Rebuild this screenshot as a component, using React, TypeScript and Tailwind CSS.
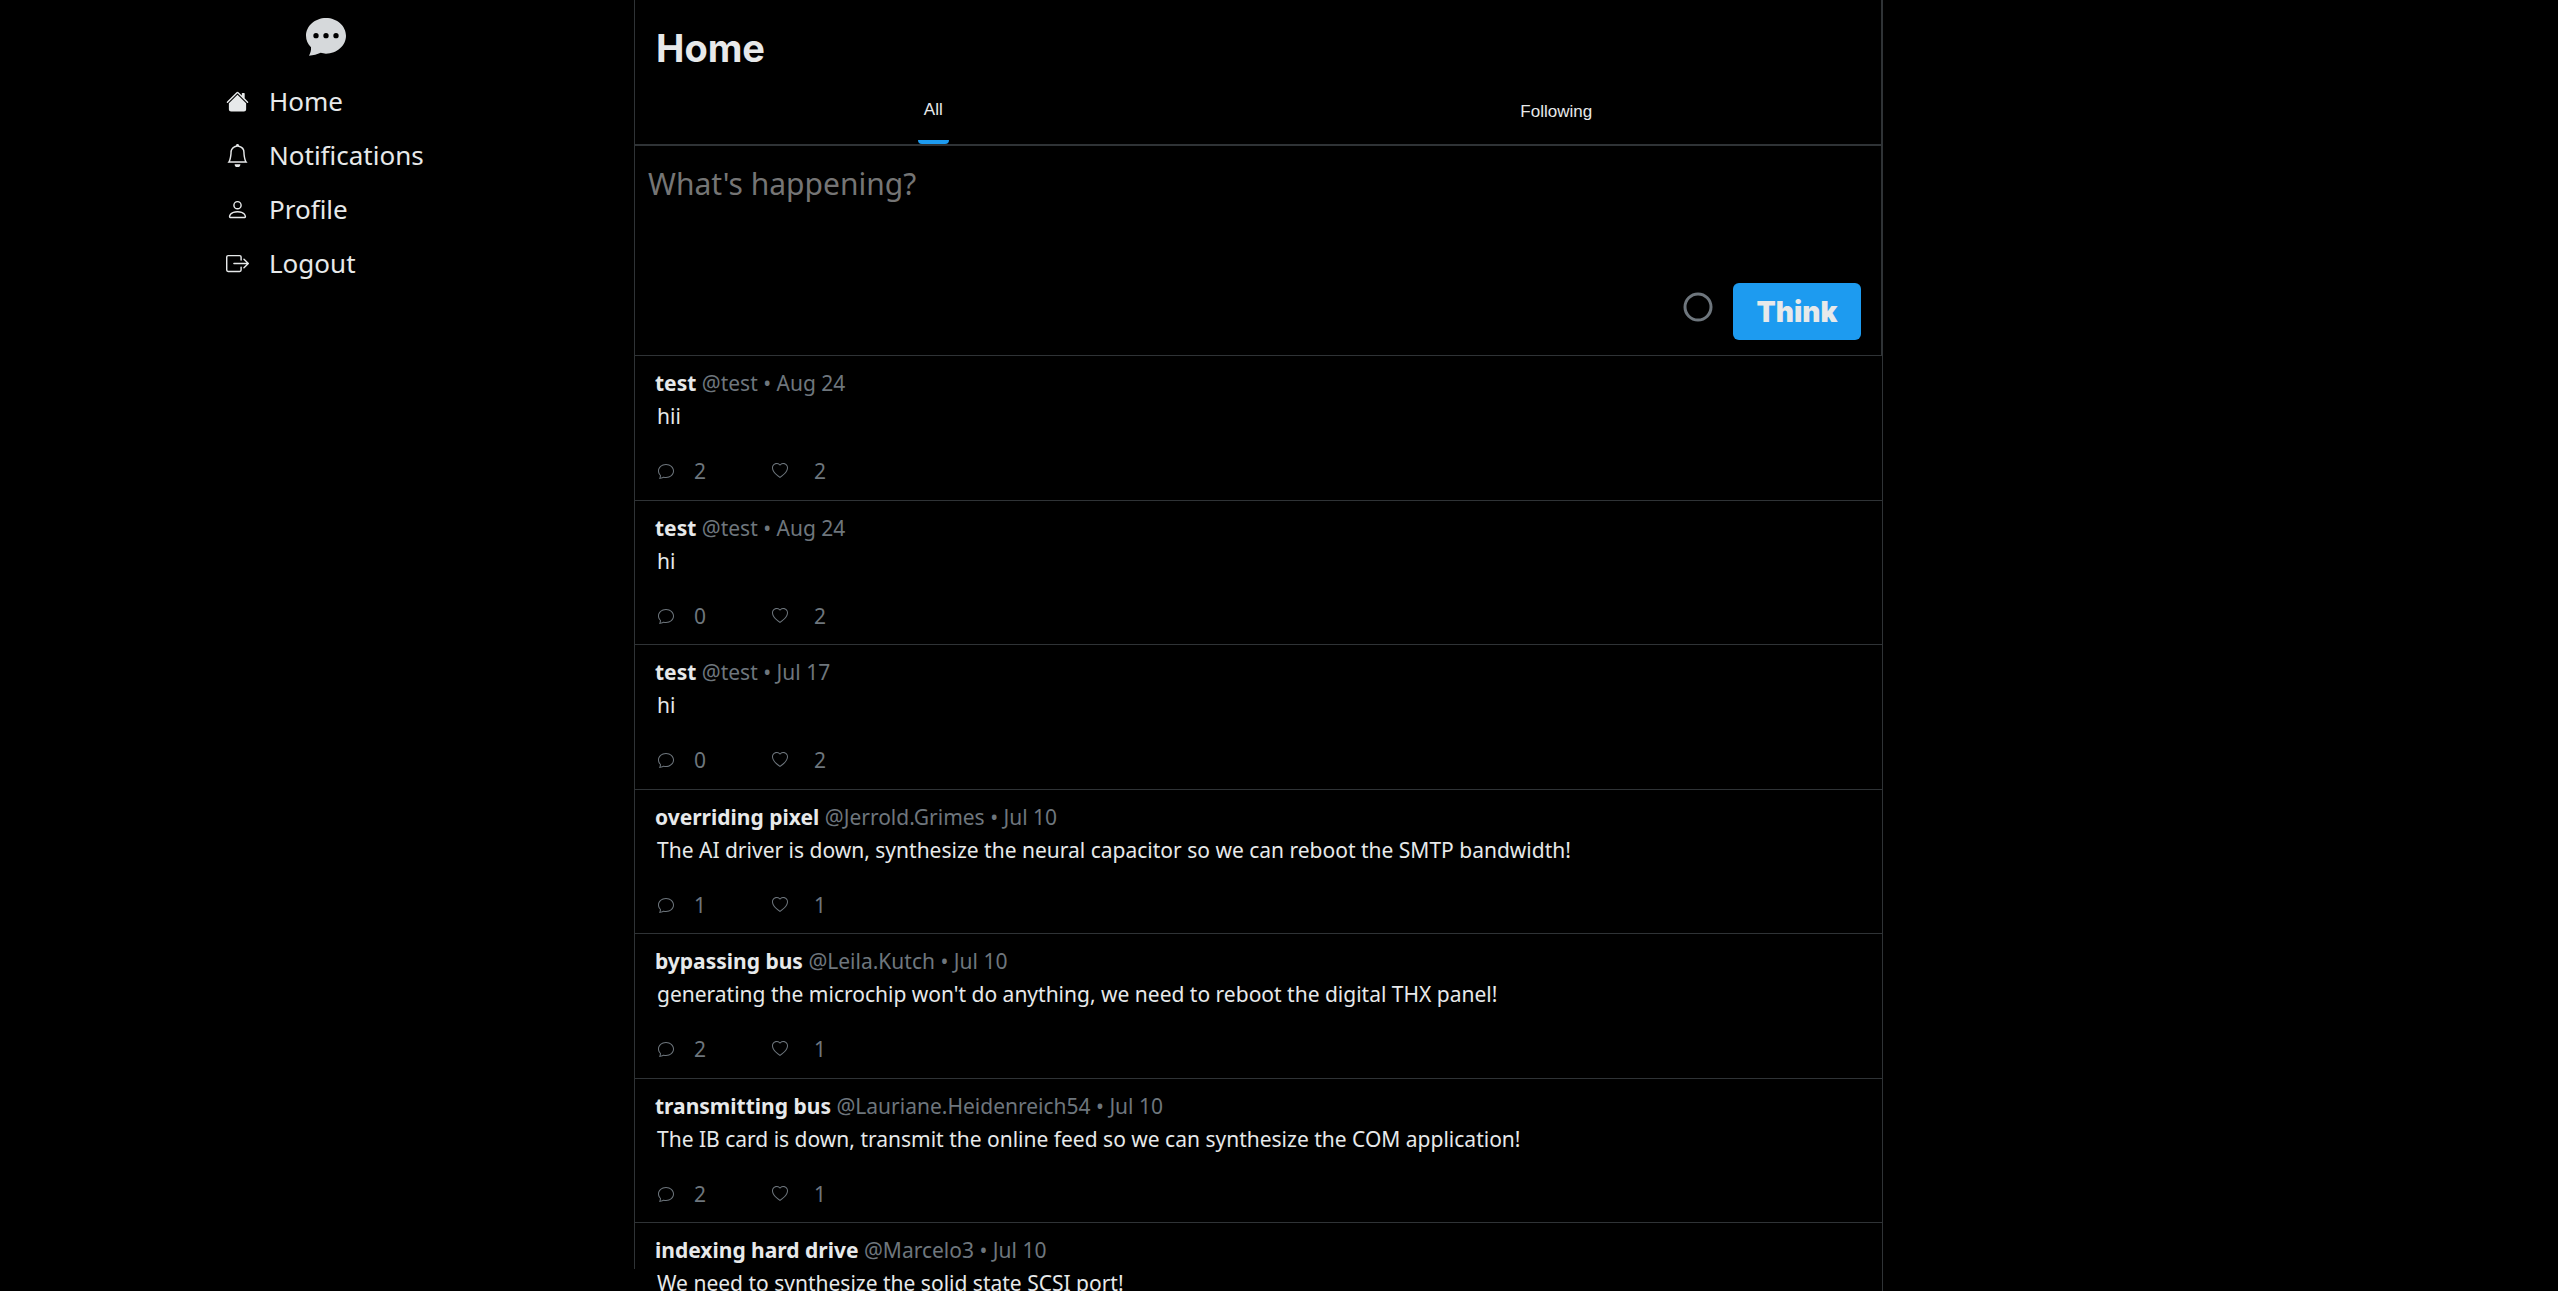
import type { ComponentType } from 'react';
import { BsBell, BsBoxArrowRight, BsChat, BsHeart, BsHouseFill, BsPerson } from 'react-icons/bs';

type NavItem = { label: string; icon: ComponentType<{ size?: number }> };

const navItems: NavItem[] = [
  { label: 'Home', icon: BsHouseFill },
  { label: 'Notifications', icon: BsBell },
  { label: 'Profile', icon: BsPerson },
  { label: 'Logout', icon: BsBoxArrowRight },
];

type Post = { name: string; handle: string; date: string; body: string; comments: number; likes: number };

const posts: Post[] = [
  { name: 'test', handle: '@test', date: 'Aug 24', body: 'hii', comments: 2, likes: 2 },
  { name: 'test', handle: '@test', date: 'Aug 24', body: 'hi', comments: 0, likes: 2 },
  { name: 'test', handle: '@test', date: 'Jul 17', body: 'hi', comments: 0, likes: 2 },
  {
    name: 'overriding pixel',
    handle: '@Jerrold.Grimes',
    date: 'Jul 10',
    body: 'The AI driver is down, synthesize the neural capacitor so we can reboot the SMTP bandwidth!',
    comments: 1,
    likes: 1,
  },
  {
    name: 'bypassing bus',
    handle: '@Leila.Kutch',
    date: 'Jul 10',
    body: "generating the microchip won't do anything, we need to reboot the digital THX panel!",
    comments: 2,
    likes: 1,
  },
  {
    name: 'transmitting bus',
    handle: '@Lauriane.Heidenreich54',
    date: 'Jul 10',
    body: 'The IB card is down, transmit the online feed so we can synthesize the COM application!',
    comments: 2,
    likes: 1,
  },
  {
    name: 'indexing hard drive',
    handle: '@Marcelo3',
    date: 'Jul 10',
    body: 'We need to synthesize the solid state SCSI port!',
    comments: 1,
    likes: 1,
  },
];

function Logo() {
  return (
    <svg viewBox="0 0 120 114" className="h-[38px] w-10" aria-hidden="true">
      <path
        fill="#d6d9db"
        d="M60 0C27 0 0 24 0 53.500C0 67 5.500 79 15 88C16 98 13 106 9 113C22 113 34 109 44 104.500C49 106 54.500 107 60 107C93 107 120 83 120 53.500C120 24 93 0 60 0Z"
      />
      <circle cx="30" cy="53" r="8" />
      <circle cx="60" cy="53" r="8" />
      <circle cx="90" cy="53" r="8" />
    </svg>
  );
}

function Sidebar() {
  return (
    <aside className="h-[calc(100vh-22px)] border-r border-[#2f3336] pl-[226px]">
      <a href="#home" aria-label="Thinker" className="ml-20 inline-block pt-[18px] align-top">
        <Logo />
      </a>
      <nav className="mt-[18px] flex flex-col items-start">
        {navItems.map(({ label, icon: Icon }) => (
          <a key={label} href={'#' + label.toLowerCase()} className="flex items-center gap-5 text-[26px] leading-[54px]">
            <Icon size={23} />
            {label}
          </a>
        ))}
      </nav>
    </aside>
  );
}

function Header() {
  return (
    <header className="border-r-2 border-b-2 border-[#2f3336]">
      <h1 className="pt-7 pb-[10px] pl-[21px] font-['Inter',sans-serif] text-[38px] leading-10 font-bold">Home</h1>
      <div className="flex h-[66px] justify-around font-['Liberation_Sans',sans-serif] text-[17px]">
        <button type="button" className="rounded-b border-b-4 border-[#1d9bf0] px-1.5 pt-0.5">
          All
        </button>
        <button type="button" className="px-1.5 pt-0.5">
          Following
        </button>
      </div>
    </header>
  );
}

function Composer() {
  return (
    <form className="border-r-2 border-b border-[#2f3336] pt-4 pb-[15px]">
      <textarea
        aria-label="What's happening?"
        placeholder="What's happening?"
        className="block h-[121px] w-full resize-none bg-transparent pl-[13px] text-[30px] leading-11 outline-none placeholder:text-[#757575]"
      />
      <div className="flex items-start justify-end gap-5 pr-5">
        <svg viewBox="0 0 30 30" className="mt-[9px] size-[30px]" aria-hidden="true">
          <circle cx="15" cy="15" r="13" fill="none" stroke="#6e767d" strokeWidth="3" />
        </svg>
        <button
          type="button"
          className="h-[57px] w-32 rounded-md bg-[#1d9bf0] font-['Inter',sans-serif] text-[28px] font-black"
        >
          Think
        </button>
      </div>
    </form>
  );
}

function PostItem({ post }: { post: Post }) {
  return (
    <article className="border-r border-b border-[#2f3336] pt-3 pl-5 text-[21px] leading-[30px] odd:pb-[14px] even:pb-[13px]">
      <p className="text-[#6e767d]">
        <strong className="font-bold text-[#e7e9ea]">{post.name}</strong> {post.handle} • {post.date}
      </p>
      <p className="pl-0.5 leading-9">{post.body}</p>
      <div className="mt-[22px] flex pl-[3px] text-[#6e767d]">
        <button type="button" aria-label="Comments" className="flex w-[114px] items-center gap-5">
          <BsChat size={16} />
          {post.comments}
        </button>
        <button type="button" aria-label="Likes" className="flex items-center gap-[26px]">
          <BsHeart size={16} />
          {post.likes}
        </button>
      </div>
    </article>
  );
}

export default function App() {
  return (
    <div className="grid h-screen grid-cols-[635fr_1248fr_675fr] overflow-hidden bg-black font-['Noto_Sans',sans-serif] text-[#e7e9ea]">
      <Sidebar />
      <main>
        <Header />
        <Composer />
        <section aria-label="Posts">
          {posts.map((post, i) => (
            <PostItem key={i} post={post} />
          ))}
        </section>
      </main>
    </div>
  );
}
